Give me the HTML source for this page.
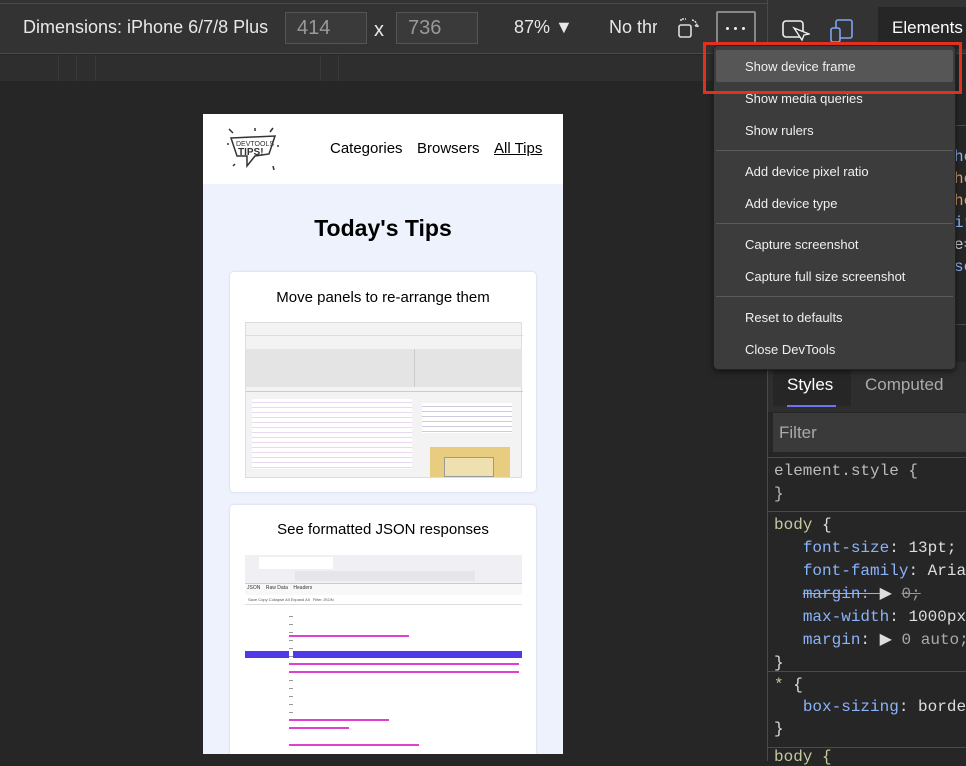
<!DOCTYPE html>
<html><head><meta charset="utf-8"><style>
*{margin:0;padding:0;box-sizing:border-box}
body{width:966px;height:761px;overflow:hidden;background:#262626;font-family:"Liberation Sans",sans-serif;position:relative;color:#e8e8e8}
.a{position:absolute}
.mono{font-family:"Liberation Mono",monospace}
.mi{position:absolute;left:745px;font-size:13px;color:#f0f0f0}
.sep{position:absolute;left:716px;width:237px;height:1px;background:#5a5a5a}
.cl{position:absolute;left:774px;font-size:16px;white-space:pre;color:#ddd}
.p{color:#8ab4f8}
</style></head><body>
<!-- toolbar -->
<div class="a" style="left:0;top:0;width:768px;height:54px;background:#333;border-bottom:1px solid #4a4a4a"></div>
<div class="a" style="left:0;top:3px;width:768px;height:1px;background:#4a4a4a"></div>
<div class="a" style="left:23px;top:17px;font-size:18px;color:#e8e8e8">Dimensions: iPhone 6/7/8 Plus</div>
<div class="a" style="left:285px;top:12px;width:82px;height:32px;border:1px solid #555;background:#3a3a3a;color:#999;font-size:20px;padding:4px 11px">414</div>
<div class="a" style="left:374px;top:19px;font-size:20px">x</div>
<div class="a" style="left:396px;top:12px;width:82px;height:32px;border:1px solid #555;background:#3a3a3a;color:#999;font-size:20px;padding:4px 11px">736</div>
<div class="a" style="left:514px;top:17px;font-size:18px">87% ▼</div>
<div class="a" style="left:609px;top:17px;font-size:18px;width:48px;overflow:hidden;white-space:nowrap">No throttling</div>
<svg class="a" style="left:676px;top:16px" width="26" height="24"><rect x="3" y="9" width="12" height="12" rx="2" fill="none" stroke="#ddd" stroke-width="1.6"/><path d="M5 5 V3 H10 M16 4 Q21 5 21 11 M19 9 l2 2 2-2" fill="none" stroke="#ddd" stroke-width="1.5" stroke-dasharray="2 1"/></svg>
<div class="a" style="left:716px;top:11px;width:40px;height:34px;border:2px solid #888;border-radius:2px"></div>
<div class="a" style="left:726px;top:27px;width:3px;height:3px;background:#eee;border-radius:2px"></div>
<div class="a" style="left:734px;top:27px;width:3px;height:3px;background:#eee;border-radius:2px"></div>
<div class="a" style="left:742px;top:27px;width:3px;height:3px;background:#eee;border-radius:2px"></div>
<!-- ruler band -->
<div class="a" style="left:0;top:55px;width:768px;height:26px;background:#2e2e2e"></div>
<div class="a" style="left:58px;top:55px;width:1px;height:26px;background:#3a3a3a"></div>
<div class="a" style="left:76px;top:55px;width:1px;height:26px;background:#3a3a3a"></div>
<div class="a" style="left:95px;top:55px;width:1px;height:26px;background:#3a3a3a"></div>
<div class="a" style="left:320px;top:55px;width:1px;height:26px;background:#3a3a3a"></div>
<div class="a" style="left:338px;top:55px;width:1px;height:26px;background:#3a3a3a"></div>
<!-- device -->
<div class="a" style="left:203px;top:114px;width:360px;height:640px;background:#eef2fc;overflow:hidden">
 <div class="a" style="left:0;top:0;width:360px;height:70px;background:#fff"></div>
 <svg class="a" style="left:22px;top:12px" width="58" height="50"><path d="M6 12 L50 10 L44 28 L30 30 L22 40 L22 30 L12 30 Z" fill="#fff" stroke="#333" stroke-width="1.5"/><text x="11" y="20" font-size="7" font-family="Liberation Sans" fill="#333">DEVTOOLS</text><text x="13" y="29" font-size="10" font-weight="bold" font-family="Liberation Sans" fill="#333">TIPS!</text><path d="M4 3l4 4M30 2v3M48 2l-3 4M2 18h2M52 20h2M8 40l2-2M48 40l1 4" stroke="#333" stroke-width="1.5"/></svg>
 <div class="a" style="left:127px;top:26px;font-size:15px;color:#000">Categories</div>
 <div class="a" style="left:214px;top:26px;font-size:15px;color:#000">Browsers</div>
 <div class="a" style="left:291px;top:26px;font-size:15px;color:#000;text-decoration:underline">All Tips</div>
 <div class="a" style="left:0;top:101px;width:360px;text-align:center;font-size:23px;font-weight:bold;color:#000">Today's Tips</div>
 <div class="a" style="left:27px;top:158px;width:306px;height:220px;background:#fff;border-radius:4px;box-shadow:0 0 2px #ccd"></div>
 <div class="a" style="left:27px;top:175px;width:306px;text-align:center;font-size:15px;color:#000">Move panels to re-arrange them</div>
 <div class="a" style="left:42px;top:208px;width:277px;height:156px;background:#f3f3f3;border:1px solid #ddd">
  <div class="a" style="left:0;top:12px;width:277px;height:1px;background:#ddd"></div>
  <div class="a" style="left:0;top:26px;width:276px;height:38px;background:#e4e4e4"></div>
  <div class="a" style="left:168px;top:26px;width:1px;height:38px;background:#ccc"></div>
  <div class="a" style="left:0;top:68px;width:277px;height:1px;background:#ccc"></div>
  <div class="a" style="left:6px;top:76px;width:160px;height:70px;background:repeating-linear-gradient(#fff 0 3px,#e8d8f0 3px 4px,#fff 4px 5px)"></div>
  <div class="a" style="left:176px;top:80px;width:90px;height:30px;background:repeating-linear-gradient(#fff 0 3px,#ccd 3px 4px,#fff 4px 5px)"></div>
  <div class="a" style="left:184px;top:124px;width:80px;height:30px;background:#e8cc80"></div>
  <div class="a" style="left:198px;top:134px;width:50px;height:20px;background:#efe0b0;border:1px solid #999"></div>
 </div>
 <div class="a" style="left:27px;top:391px;width:306px;height:260px;background:#fff;border-radius:4px;box-shadow:0 0 2px #ccd"></div>
 <div class="a" style="left:27px;top:407px;width:306px;text-align:center;font-size:15px;color:#000">See formatted JSON responses</div>
 <div class="a" style="left:42px;top:441px;width:277px;height:200px;background:#fff">
  <div class="a" style="left:0;top:0;width:277px;height:28px;background:#f0f0f4"></div>
  <div class="a" style="left:14px;top:2px;width:74px;height:12px;background:#fff"></div>
  <div class="a" style="left:50px;top:16px;width:180px;height:10px;background:#e6e6ea"></div>
  <div class="a" style="left:0;top:28px;width:277px;height:12px;background:#f8f8f8;border-top:1px solid #ccc"></div>
  <div class="a" style="left:2px;top:30px;font-size:5px;color:#333">JSON &nbsp;&nbsp; Raw Data &nbsp;&nbsp; Headers</div>
  <div class="a" style="left:0;top:40px;width:277px;height:10px;border-bottom:1px solid #ddd;font-size:4px;color:#555;padding:2px 3px">Save Copy Collapse All Expand All &nbsp; Filter JSON</div>
  <div class="a" style="left:0;top:96px;width:277px;height:7px;background:#4f3ae8"></div>
  <div class="a" style="left:44px;top:55px;width:4px;height:120px;background:repeating-linear-gradient(#fff 0 6px,#999 6px 7px,#fff 7px 8px)"></div>
  <div class="a" style="left:44px;top:80px;width:120px;height:2px;background:#e040d0"></div>
  <div class="a" style="left:44px;top:108px;width:230px;height:2px;background:#e040d0"></div>
  <div class="a" style="left:44px;top:116px;width:230px;height:2px;background:#e040d0"></div>
  <div class="a" style="left:44px;top:164px;width:100px;height:2px;background:#e040d0"></div>
  <div class="a" style="left:44px;top:172px;width:60px;height:2px;background:#e040d0"></div>
  <div class="a" style="left:44px;top:189px;width:130px;height:2px;background:#e040d0"></div>
 </div>
</div>
<!-- right panel -->
<div class="a" style="left:767px;top:0;width:1px;height:761px;background:#4a4a4a"></div>
<div class="a" style="left:768px;top:0;width:198px;height:54px;background:#333;border-bottom:1px solid #4a4a4a"></div>
<svg class="a" style="left:780px;top:18px" width="30" height="24"><rect x="3" y="3" width="20" height="16" rx="3" fill="none" stroke="#eee" stroke-width="1.6"/><path d="M14 10 l8 12 2-5 5-1z" fill="#333" stroke="#eee" stroke-width="1.4"/></svg>
<svg class="a" style="left:828px;top:18px" width="28" height="26"><rect x="8" y="2" width="16" height="18" rx="2" fill="none" stroke="#7ea6f0" stroke-width="1.6"/><rect x="3" y="10" width="9" height="14" rx="2" fill="#333" stroke="#7ea6f0" stroke-width="1.6"/></svg>
<div class="a" style="left:878px;top:7px;width:88px;height:42px;background:#262626;font-size:17px;padding:11px 14px;color:#fff">Elements</div>
<div class="a" style="left:768px;top:125px;width:198px;height:1px;background:#4a4a4a"></div>
<div class="a mono" style="left:954px;top:146px;font-size:16px;line-height:22px;color:#8ab4f8">he<br><span style="color:#d9a070">he<br>he</span><br>ir<br><span style="color:#ccc">e=</span><br>sc</div>
<div class="a" style="left:768px;top:324px;width:198px;height:1px;background:#4a4a4a"></div>
<div class="a" style="left:768px;top:362px;width:198px;height:50px;background:#2e2e2e"></div>
<div class="a" style="left:773px;top:367px;width:78px;height:39px;background:#262626"></div>
<div class="a" style="left:787px;top:375px;font-size:17px;color:#fff">Styles</div>
<div class="a" style="left:787px;top:405px;width:49px;height:2px;background:#6c74f0"></div>
<div class="a" style="left:865px;top:375px;font-size:17px;color:#aaa">Computed</div>
<div class="a" style="left:773px;top:413px;width:193px;height:39px;background:#3a3a3a;font-size:17px;color:#aaa;padding:10px 6px">Filter</div>
<div class="a" style="left:768px;top:457px;width:198px;height:1px;background:#4a4a4a"></div>
<div class="cl mono" style="top:460px;line-height:23px;color:#bbb">element.style {
}</div>
<div class="a" style="left:768px;top:511px;width:198px;height:1px;background:#4a4a4a"></div>
<div class="cl mono" style="top:514px;line-height:23px"><span style="color:#c8c8a0">body</span> {
   <span class="p">font-size</span>: 13pt;
   <span class="p">font-family</span>: Arial
   <span class="p" style="text-decoration:line-through">margin: </span>▶ <span style="color:#999;text-decoration:line-through">0;</span>
   <span class="p">max-width</span>: 1000px
   <span class="p">margin</span>: ▶ <span style="color:#aaa">0 auto;</span>
}</div>
<div class="a" style="left:768px;top:671px;width:198px;height:1px;background:#4a4a4a"></div>
<div class="cl mono" style="top:674px;line-height:22px"><span style="color:#c8c8a0">*</span> {
   <span class="p">box-sizing</span>: border
}</div>
<div class="a" style="left:768px;top:747px;width:198px;height:1px;background:#4a4a4a"></div>
<div class="cl mono" style="top:748px;color:#c8c8a0">body {</div>
<!-- menu -->
<div class="a" style="left:713px;top:45px;width:243px;height:325px;background:#3c3c3c;border:1px solid #222;border-radius:5px;box-shadow:0 2px 6px rgba(0,0,0,.5)"></div>
<div class="a" style="left:716px;top:50px;width:237px;height:32px;background:#565656;border-radius:2px"></div>
<div class="mi" style="top:59px">Show device frame</div>
<div class="mi" style="top:91px">Show media queries</div>
<div class="mi" style="top:123px">Show rulers</div>
<div class="sep" style="top:150px"></div>
<div class="mi" style="top:164px">Add device pixel ratio</div>
<div class="mi" style="top:196px">Add device type</div>
<div class="sep" style="top:223px"></div>
<div class="mi" style="top:237px">Capture screenshot</div>
<div class="mi" style="top:269px">Capture full size screenshot</div>
<div class="sep" style="top:296px"></div>
<div class="mi" style="top:310px">Reset to defaults</div>
<div class="mi" style="top:342px">Close DevTools</div>
<div class="a" style="left:703px;top:42px;width:259px;height:52px;border:3px solid #e0301e"></div>
</body></html>
